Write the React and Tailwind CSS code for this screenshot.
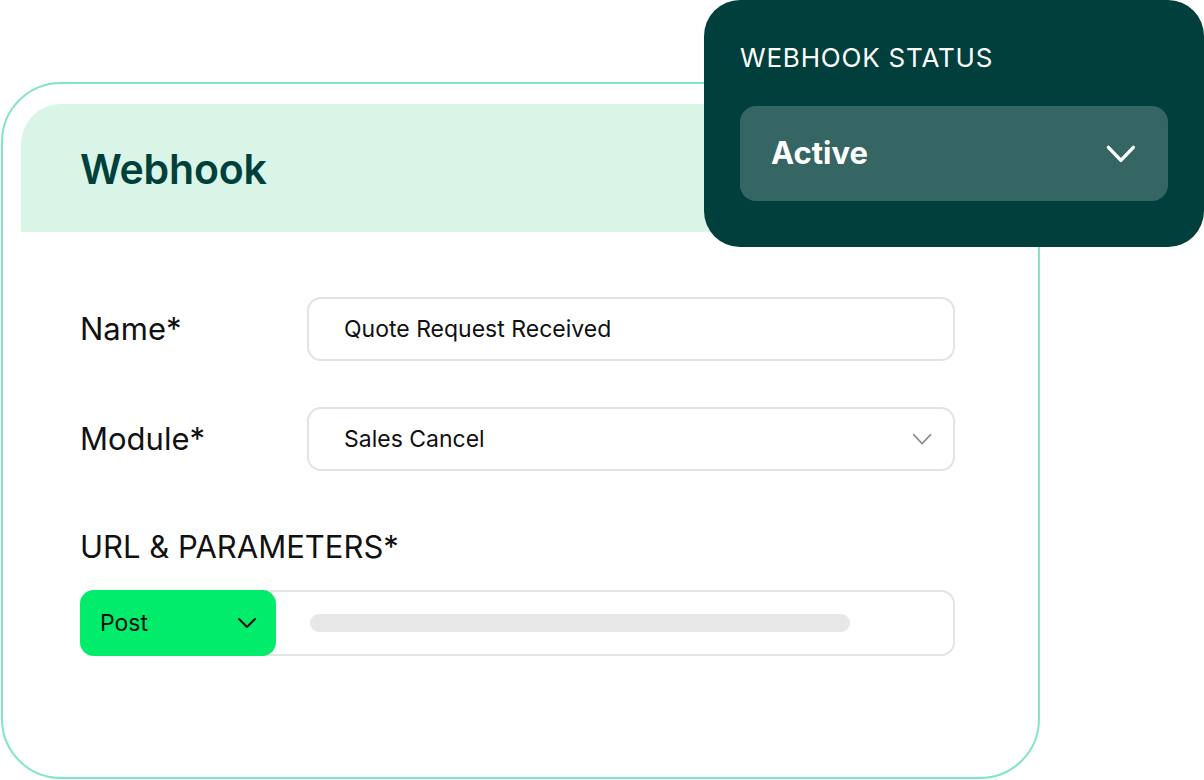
const font = "font-['Inter','Noto_Sans',sans-serif]"

function Chevron({ w, h, stroke, color }) {
  return (
    <svg width={w + stroke * 2} height={h + stroke * 2} viewBox={`0 0 ${w + stroke * 2} ${h + stroke * 2}`} fill="none" className="shrink-0">
      <polyline
        points={`${stroke},${stroke} ${stroke + w / 2},${stroke + h} ${stroke + w},${stroke}`}
        stroke={color}
        strokeWidth={stroke}
        strokeLinecap="round"
        strokeLinejoin="round"
      />
    </svg>
  )
}

function Field({ label, children }) {
  return (
    <div className="flex items-center">
      <div className="w-[227px] text-[31px] leading-[36px] text-[#111]">{label}</div>
      {children}
    </div>
  )
}

function Box({ children }) {
  return (
    <div className="flex h-[64px] w-[648px] items-center rounded-[14px] border-2 border-[#e3e3e3] pl-[35px] pr-[20px] text-[23px] text-[#111]">
      {children}
    </div>
  )
}

export default function App() {
  return (
    <div className={`relative h-[780px] w-[1204px] overflow-hidden bg-white ${font}`}>
      <div className="ml-[1px] mt-[82px] h-[697px] w-[1039px] rounded-[60px] border-2 border-[#80e6c5]">
        <div className="px-[18px] pt-[20px]">
          <div className="flex h-[128px] items-center rounded-t-[40px] bg-[#d8f5e8] pl-[59px] pt-[3px]">
            <h1 className="text-[41px] font-semibold tracking-[-0.2px] text-[#00403b]">Webhook</h1>
          </div>
        </div>

        <div className="px-[77px]">
          <div className="mt-[65px]">
            <Field label="Name*">
              <Box>Quote Request Received</Box>
            </Field>
          </div>
          <div className="mt-[46px]">
            <Field label="Module*">
              <Box>
                <span className="flex-1">Sales Cancel</span>
                <span className="mr-[1px]">
                  <Chevron w={17} h={9} stroke={1.6} color="#8c8c8c" />
                </span>
              </Box>
            </Field>
          </div>

          <div className="mt-[58px] text-[31px] leading-[36px] text-[#111]">URL &amp; PARAMETERS*</div>

          <div className="mt-[25px] flex h-[66px] w-[875px] items-center rounded-[14px] border-2 border-[#e3e3e3]">
            <div className="-my-[2px] -ml-[2px] flex h-[66px] w-[196px] items-center justify-between rounded-[14px] bg-[#00ec6a] pl-[20px] pr-[19px] text-[23px] text-[#111]">
              <span>Post</span>
              <Chevron w={16} h={8} stroke={2} color="#111" />
            </div>
            <div className="ml-[34px] h-[18px] w-[540px] rounded-full bg-[#e7e7e7]" />
          </div>
        </div>
      </div>

      <div className="absolute left-[704px] top-0 h-[247px] w-[500px] rounded-[36px] bg-[#003f3b] px-[36px] pt-[42px]">
        <div className="text-[26px] leading-[32px] tracking-[0.8px] text-white">WEBHOOK STATUS</div>
        <div className="mt-[32px] flex h-[95px] w-[428px] items-center justify-between rounded-[16px] bg-[#356664] pl-[31px] pr-[31px]">
          <span className="text-[31px] font-bold text-white">Active</span>
          <Chevron w={25} h={13} stroke={3.4} color="#fff" />
        </div>
      </div>
    </div>
  )
}
